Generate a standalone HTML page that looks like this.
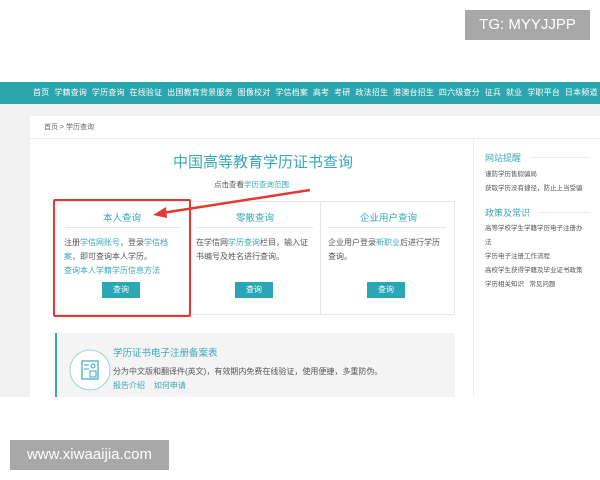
<!DOCTYPE html><html><head><meta charset="utf-8"><style>
*{margin:0;padding:0;box-sizing:border-box}
body{width:600px;height:480px;background:#fff;position:relative;overflow:hidden;font-family:"Liberation Sans","Noto Sans CJK SC",sans-serif;font-size:8px;color:#555}
.a{position:absolute;white-space:nowrap}
.t{color:#3aa8b3}
.btn{position:absolute;width:38px;height:16px;background:#2aa7b3;color:#fff;font-size:8px;text-align:center;line-height:16px}
</style></head><body>
<div class="a" style="left:465px;top:10px;width:125px;height:30px;background:#a8a8a8;color:#fff;font-size:15px;line-height:30px;text-align:center">TG: MYYJJPP</div>
<div class="a" style="left:0;top:82px;width:600px;height:22px;background:#2ba6ae;color:#fff;font-size:8px;line-height:22px;padding-left:33px;letter-spacing:0.2px">首页&nbsp; 学籍查询&nbsp; 学历查询&nbsp; 在线验证&nbsp; 出国教育背景服务&nbsp; 图像校对&nbsp; 学信档案&nbsp; 高考&nbsp; 考研&nbsp; 政法招生&nbsp; 港澳台招生&nbsp; 四六级查分&nbsp; 征兵&nbsp; 就业&nbsp; 学职平台&nbsp; 日本频道</div>
<div class="a" style="left:0;top:104px;width:600px;height:293px;background:#f1f1f1"></div>
<div class="a" style="left:30px;top:116px;width:570px;height:281px;background:#fff"></div>
<div class="a" style="left:30px;top:138px;width:570px;height:1px;background:#eee"></div>
<div class="a" style="left:473px;top:139px;width:1px;height:258px;background:#eee"></div>
<div class="a" style="left:44px;top:122px;font-size:7px;color:#666">首页 &gt; 学历查询</div>
<div class="a t" style="left:173px;top:151px;font-size:15px;color:#3aa8b3">中国高等教育学历证书查询</div>
<div class="a" style="left:214px;top:179px;font-size:7.5px">点击查看<span class="t">学历查询范围</span></div>
<div class="a" style="left:53px;top:201px;width:402px;height:114px;border:1px solid #e6e6e6"></div>
<div class="a" style="left:320px;top:201px;width:1px;height:114px;background:#e6e6e6"></div>
<div class="a" style="left:190px;top:201px;width:1px;height:114px;background:#e6e6e6"></div>
<div class="a" style="left:53px;top:199px;width:138px;height:118px;border:2px solid #e23a33;border-radius:2px"></div>
<div class="a" style="left:65px;top:227px;width:114px;height:1px;background:#e6e6e6"></div>
<div class="a" style="left:196px;top:227px;width:117px;height:1px;background:#e6e6e6"></div>
<div class="a" style="left:328px;top:227px;width:118px;height:1px;background:#e6e6e6"></div>
<div class="a t" style="left:103px;top:210px;font-size:9.5px">本人查询</div>
<div class="a t" style="left:236px;top:210px;font-size:9.5px">零散查询</div>
<div class="a t" style="left:360px;top:210px;font-size:9.5px">企业用户查询</div>
<div class="a" style="left:64px;top:236px;line-height:14px;font-size:8px">注册<span class="t">学信网账号</span>，登录<span class="t">学信档</span><br><span class="t">案</span>，即可查询本人学历。<br><span class="t">查询本人学籍学历信息方法</span></div>
<div class="a" style="left:196px;top:236px;line-height:14px;font-size:8px">在学信网<span class="t">学历查询</span>栏目，输入证<br>书编号及姓名进行查询。</div>
<div class="a" style="left:328px;top:236px;line-height:14px;font-size:8px">企业用户登录<span class="t">新职业</span>后进行学历<br>查询。</div>
<div class="btn" style="left:102px;top:282px">查询</div>
<div class="btn" style="left:235px;top:282px">查询</div>
<div class="btn" style="left:367px;top:282px">查询</div>
<svg class="a" style="left:0;top:0" width="600" height="480"><line x1="310" y1="190" x2="162" y2="213" stroke="#e23a33" stroke-width="2.5"/><polygon points="153,215 166,207 167,218" fill="#e23a33"/></svg>
<div class="a" style="left:55px;top:333px;width:400px;height:64px;background:#f4f4f4;border-left:2px solid #3aa8b3"></div>
<svg class="a" style="left:68px;top:348px" width="44" height="44"><circle cx="22" cy="22" r="20" fill="#fff" stroke="#9fd3d7" stroke-width="1"/><rect x="14" y="13" width="16" height="18" fill="none" stroke="#3aa8b3" stroke-width="1.2"/><circle cx="25" cy="18" r="2" fill="none" stroke="#3aa8b3"/><line x1="16" y1="17" x2="21" y2="17" stroke="#3aa8b3"/><line x1="16" y1="21" x2="21" y2="21" stroke="#3aa8b3"/><rect x="22" y="23" width="6" height="6" fill="none" stroke="#3aa8b3"/></svg>
<div class="a t" style="left:113px;top:345px;font-size:9.5px">学历证书电子注册备案表</div>
<div class="a" style="left:113px;top:366px;font-size:8px">分为中文版和翻译件(英文)，有效期内免费在线验证，使用便捷，多重防伪。</div>
<div class="a t" style="left:113px;top:380px;font-size:8px">报告介绍&nbsp;&nbsp;&nbsp; 如何申请</div>
<div class="a t" style="left:485px;top:151px;font-size:9px">网站提醒</div>
<div class="a" style="left:530px;top:157px;width:60px;height:1px;background:#eee"></div>
<div class="a" style="left:485px;top:168px;font-size:6.5px;line-height:14px;color:#555">谨防学历售假骗局<br>获取学历没有捷径，防止上当受骗</div>
<div class="a t" style="left:485px;top:206px;font-size:9px">政策及常识</div>
<div class="a" style="left:538px;top:212px;width:52px;height:1px;background:#eee"></div>
<div class="a" style="left:485px;top:222px;font-size:6.5px;line-height:14px;color:#555">高等学校学生学籍学历电子注册办<br>法<br>学历电子注册工作流程<br>高校学生获得学籍及毕业证书政策<br>学历相关知识&nbsp;&nbsp; 常见问题</div>
<div class="a" style="left:10px;top:440px;width:159px;height:30px;background:#a8a8a8;color:#fff;font-size:15px;line-height:30px;text-align:center">www.xiwaaijia.com</div>
</body></html>
